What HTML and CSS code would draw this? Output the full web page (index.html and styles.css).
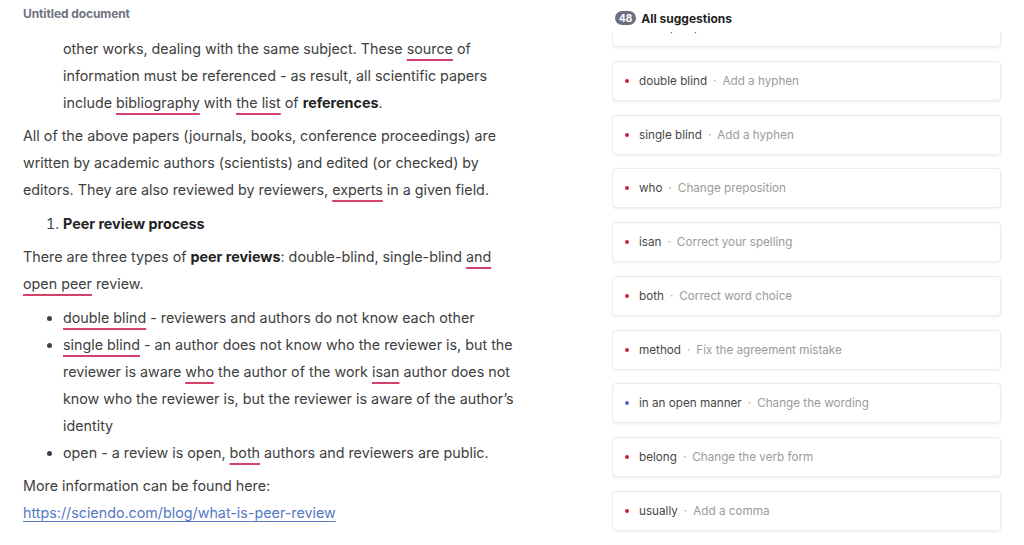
FILE: index.html
```html
<!DOCTYPE html>
<html>
<head>
<meta charset="utf-8">
<link rel="stylesheet" href="styles.css">
</head>
<body>
<div class="app">
  <div class="doc">
    <div class="title">Untitled document</div>
    <div class="content">
      <p class="indent">other works, dealing with the same subject. These <span class="err">source</span> of information must be referenced - as result, all scientific papers include <span class="err">bibliography</span> with <span class="err">the list</span> of <b>references</b>.</p>
      <p>All of the above papers (journals, books, conference proceedings) are written by academic authors (scientists) and edited (or checked) by editors. They are also reviewed by reviewers, <span class="err">experts</span> in a given field.</p>
      <ol class="num">
        <li><b>Peer review process</b></li>
      </ol>
      <p>There are three types of <b>peer reviews</b>: double-blind, single-blind <span class="err">and</span> <span class="err">open peer</span> review.</p>
      <ul class="bul">
        <li><span class="err">double blind</span> - reviewers and authors do not know each other</li>
        <li><span class="err">single blind</span> - an author does not know who the reviewer is, but the reviewer is aware <span class="err">who</span> the author of the work <span class="err">isan</span> author does not know who the reviewer is, but the reviewer is aware of the author’s identity</li>
        <li>open - a review is open, <span class="err">both</span> authors and reviewers are public.</li>
      </ul>
      <p>More information can be found here:<br><a class="link" href="#">https://sciendo.com/blog/what-is-peer-review</a></p>
    </div>
  </div>
  <div class="panel">
    <div class="panel-head"><span class="badge">48</span><span class="head-title">All suggestions</span></div>
    <div class="list">
      <div class="card card-first"><span class="dot"></span><span class="word">and open peer</span><span class="sep">·</span><span class="desc">Add an article</span></div>
      <div class="card"><span class="dot"></span><span class="word">double blind</span><span class="sep">·</span><span class="desc">Add a hyphen</span></div>
      <div class="card"><span class="dot"></span><span class="word">single blind</span><span class="sep">·</span><span class="desc">Add a hyphen</span></div>
      <div class="card"><span class="dot"></span><span class="word">who</span><span class="sep">·</span><span class="desc">Change preposition</span></div>
      <div class="card"><span class="dot"></span><span class="word">isan</span><span class="sep">·</span><span class="desc">Correct your spelling</span></div>
      <div class="card"><span class="dot"></span><span class="word">both</span><span class="sep">·</span><span class="desc">Correct word choice</span></div>
      <div class="card"><span class="dot"></span><span class="word">method</span><span class="sep">·</span><span class="desc">Fix the agreement mistake</span></div>
      <div class="card"><span class="dot dot-blue"></span><span class="word">in an open manner</span><span class="sep">·</span><span class="desc">Change the wording</span></div>
      <div class="card"><span class="dot"></span><span class="word">belong</span><span class="sep">·</span><span class="desc">Change the verb form</span></div>
      <div class="card"><span class="dot"></span><span class="word">usually</span><span class="sep">·</span><span class="desc">Add a comma</span></div>
      <div class="card"><span class="dot"></span><span class="word">peer</span><span class="sep">·</span><span class="desc">Add an article</span></div>
    </div>
  </div>
</div>
</body>
</html>
```

FILE: styles.css
```css
* { box-sizing: border-box; }
html, body {
  margin: 0;
  padding: 0;
  background: #ffffff;
  font-family: Inter, "Noto Sans", sans-serif;
  height: 545px;
  overflow: hidden;
}
.app {
  display: flex;
  height: 545px;
}
.doc {
  width: 612px;
  flex: none;
  padding-left: 23px;
}
.title {
  font-size: 12px;
  font-weight: 700;
  color: #70727f;
  line-height: 16px;
  margin-top: 6px;
  letter-spacing: -0.1px;
}
.content {
  width: 500px;
  padding-top: 12.5px;
  font-size: 14.3px;
  line-height: 27px;
  color: #404040;
}
.content p, .content ol, .content ul {
  margin: 0 0 6.5px 0;
}
.content b { font-weight: 700; color: #222; }
.indent { padding-left: 40px; }
.num, .bul { padding-left: 40px; }
.num li::marker { font-weight: 400; }
.err {
  text-decoration: underline;
  text-decoration-color: #d4426a;
  text-decoration-thickness: 1.5px;
  text-underline-offset: 5px;
}
.link {
  color: #5478c4;
  text-decoration: underline;
  text-decoration-thickness: 1px;
  text-underline-offset: 3px;
}
.panel {
  width: 390px;
  flex: none;
  display: flex;
  flex-direction: column;
  height: 545px;
}
.panel-head {
  display: flex;
  align-items: center;
  height: 36px;
  padding-left: 3px;
}
.badge {
  background: #6c6f82;
  color: #fff;
  font-size: 10px;
  font-weight: 700;
  height: 14px;
  line-height: 14px;
  padding: 0 4px;
  border-radius: 7px;
  margin-right: 5px;
}
.head-title {
  font-size: 12px;
  font-weight: 700;
  color: #1f1f1f;
}
.list {
  flex: 1;
  overflow: hidden;
  margin-top: -4px;
  padding-right: 1px;
  padding-left: 0;
}
.card {
  height: 40px;
  background: #fff;
  border: 1px solid #ececec;
  border-radius: 4px;
  box-shadow: 0 1px 3px rgba(0,0,0,0.07);
  display: flex;
  align-items: center;
  padding-left: 12px;
  margin-bottom: 13.75px;
  font-size: 11.7px;
  white-space: nowrap;
}
.card-first { margin-top: -25px; }
.dot {
  width: 4px;
  height: 4px;
  border-radius: 50%;
  background: #c9254b;
  margin-right: 10px;
  flex: none;
}
.dot-blue { background: #4d6cc6; }
.word { color: #474747; }
.sep { color: #a8a8a8; margin: 0 6px; }
.desc { color: #9b9b9b; }
```
